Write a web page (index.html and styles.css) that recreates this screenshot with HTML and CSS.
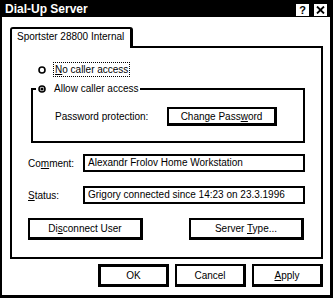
FILE: index.html
```html
<!DOCTYPE html>
<html>
<head>
<meta charset="utf-8">
<link rel="stylesheet" href="styles.css">
</head>
<body>
<div class="window">
  <div class="titlebar">
    <span class="title">Dial-Up Server</span>
    <span class="tbtns">
      <span class="tbtn help">?</span>
      <span class="tbtn close"><svg width="9" height="8" viewBox="0 0 9 8"><path d="M1 0.5 L8 7.5 M8 0.5 L1 7.5" stroke="#000" stroke-width="1.8" fill="none"/></svg></span>
    </span>
  </div>
  <div class="body">
    <div class="tabs">
      <div class="tab">Sportster 28800 Internal</div>
      <div class="tabfill"></div>
    </div>
    <div class="panel">
      <div class="radio-row">
        <svg class="radio" width="8" height="8" viewBox="0 0 8 8"><circle cx="4" cy="4" r="3" stroke="#000" stroke-width="1.6" fill="#fff"/></svg>
        <span class="focus"><u>N</u>o caller access</span>
      </div>
      <fieldset class="group">
        <legend class="legend">
          <svg class="radio" width="8" height="8" viewBox="0 0 8 8"><circle cx="4" cy="4" r="3" stroke="#000" stroke-width="1.6" fill="#fff"/><circle cx="4" cy="4" r="1.6" fill="#000"/></svg>
          <span>Allow caller access</span>
        </legend>
        <div class="pw-row">
          <span class="pw-label">Password protection:</span>
          <button class="btn pw-btn">Change Pass<u>w</u>ord</button>
        </div>
      </fieldset>
      <div class="field-row comment">
        <span class="flabel">Co<u>m</u>ment:</span>
        <div class="fbox">Alexandr Frolov Home Workstation</div>
      </div>
      <div class="field-row status">
        <span class="flabel"><u>S</u>tatus:</span>
        <div class="fbox">Grigory connected since 14:23 on 23.3.1996</div>
      </div>
      <div class="action-row">
        <button class="btn act">Di<u>s</u>connect User</button>
        <button class="btn act">Server <u>T</u>ype...</button>
      </div>
    </div>
    <div class="dlg-row">
      <button class="btn dlg default">OK</button>
      <button class="btn dlg">Cancel</button>
      <button class="btn dlg"><u>A</u>pply</button>
    </div>
  </div>
</div>
</body>
</html>
```
FILE: styles.css
```css
* { box-sizing: border-box; }
html, body { margin: 0; padding: 0; background: #fff; }
body {
  font-family: "Liberation Sans", Arial, sans-serif;
  font-size: 10px;
  line-height: 13px;
  color: #000;
}
.window {
  width: 333px;
  height: 298px;
  border-left: 2px solid #000;
  border-right: 3px solid #000;
  border-bottom: 3px solid #000;
  background: #fff;
  display: flex;
  flex-direction: column;
}
.titlebar {
  height: 17px;
  background: #000;
  display: flex;
  align-items: center;
  justify-content: space-between;
  padding: 0 3px 0 3px;
}
.title {
  color: #fff;
  font-weight: bold;
  font-size: 12px;
  line-height: 14px;
}
.tbtns { display: flex; gap: 5px; padding-top: 2px; }
.tbtn {
  width: 13px;
  height: 12px;
  background: #fff;
  display: flex;
  align-items: center;
  justify-content: center;
  font-weight: bold;
  font-size: 11px;
  line-height: 12px;
}
.body {
  padding: 10px 7px 0 8px;
  display: flex;
  flex-direction: column;
}
.tabs { display: flex; height: 21px; }
.tab {
  width: 123px;
  height: 21px;
  border: 2px solid #000;
  border-right-width: 3px;
  border-bottom: none;
  border-radius: 3px 3px 0 0;
  padding: 2px 0 0 5px;
  line-height: 12px;
  white-space: nowrap;
}
.tabfill { flex: 1; border-bottom: 2px solid #000; }
.panel {
  height: 211px;
  border: 2px solid #000;
  border-top: none;
  display: flex;
  flex-direction: column;
}
.radio-row {
  display: flex;
  align-items: center;
  gap: 7px;
  margin: 14px 0 0 26px;
}
.radio { display: block; flex: none; }
.focus {
  border: 1px dotted #000;
  padding: 0 1px;
  line-height: 13px;
}
.group {
  margin: 5px 16px 0 19px;
  padding: 0;
  border: 2px solid #000;
  min-width: 0;
}
.legend {
  margin-left: 3px;
  padding: 0 2px;
  display: flex;
  align-items: center;
  gap: 8px;
  line-height: 14px;
}
.pw-row {
  display: flex;
  align-items: center;
  margin: 11px 0 15px 22px;
}
.pw-label { width: 112px; }
.btn {
  font-family: inherit;
  font-size: 10px;
  line-height: 13px;
  color: #000;
  background: #fff;
  border: 2px solid #000;
  border-right-width: 3px;
  border-bottom-width: 3px;
  padding: 0;
  margin: 0;
  border-radius: 0;
  text-align: center;
}
.pw-btn { width: 110px; height: 19px; }
.field-row {
  display: flex;
  align-items: center;
  margin: 11px 0 0 16px;
}
.field-row.status { margin-top: 14px; }
.flabel { width: 55px; }
.fbox {
  width: 222px;
  height: 18px;
  border: 2px solid #000;
  padding: 0 0 0 3px;
  line-height: 14px;
  white-space: nowrap;
  overflow: hidden;
}
.action-row {
  display: flex;
  justify-content: space-between;
  margin: 14px 17px 0 16px;
}
.act { width: 115px; height: 22px; }
.dlg-row {
  display: flex;
  justify-content: flex-end;
  gap: 6px;
  margin-top: 5px;
}
.dlg { width: 71px; height: 23px; }
.default { border-width: 3px; }
```
